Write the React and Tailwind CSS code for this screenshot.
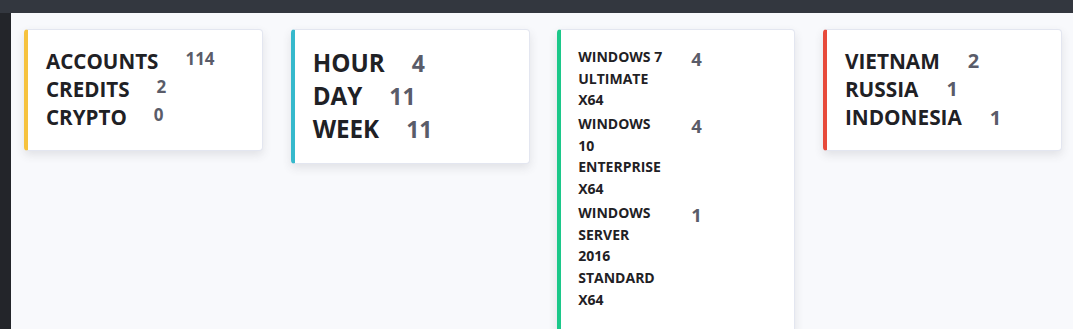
import React from 'react';

const font = { fontFamily: '"Open Sans", "Noto Sans", sans-serif' };

const sources = [
  { label: 'ACCOUNTS', value: 114 },
  { label: 'CREDITS', value: 2 },
  { label: 'CRYPTO', value: 0 },
];

const periods = [
  { label: 'HOUR', value: 4 },
  { label: 'DAY', value: 11 },
  { label: 'WEEK', value: 11 },
];

const systems = [
  { lines: ['WINDOWS 7', 'ULTIMATE', 'X64'], value: 4 },
  { lines: ['WINDOWS', '10', 'ENTERPRISE', 'X64'], value: 4 },
  { lines: ['WINDOWS', 'SERVER', '2016', 'STANDARD', 'X64'], value: 1 },
];

const countries = [
  { label: 'VIETNAM', value: 2 },
  { label: 'RUSSIA', value: 1 },
  { label: 'INDONESIA', value: 1 },
];

const Card = ({ color, className = '', children }) => (
  <div
    className={`flex-1 min-w-0 bg-white rounded-[4px] border border-[#e3e6f0] border-l-4 shadow-[0_4px_10px_rgba(58,59,69,0.12)] ${color} ${className}`}
  >
    {children}
  </div>
);

export default function App() {
  return (
    <div className="w-[1073px] h-[329px] overflow-hidden flex flex-col bg-[#f8f9fc]" style={font}>
      <div className="h-[13px] shrink-0 bg-[#33373f]" />
      <div className="flex flex-1 min-h-0">
        <div className="w-[11px] shrink-0 bg-[#23252a]" />
        <div className="flex-1 flex items-start gap-[27.5px] pl-[13px] pr-[11px] pt-[16px]">
          <Card color="border-l-[#f6c23e]" className="pl-[18px] pt-[17px] pb-[19px]">
            {sources.map((r) => (
              <div key={r.label} className="flex items-center h-[28px]">
                <span className="text-[20.6px] font-bold text-[#1f2125]">{r.label}</span>
                <span className="ml-[27px] -mt-[4px] text-[17px] font-bold text-[#5a5c69]">{r.value}</span>
              </div>
            ))}
          </Card>

          <Card color="border-l-[#36b9cc]" className="pl-[18px] pt-[17px] pb-[17px]">
            {periods.map((r) => (
              <div key={r.label} className="flex items-center h-[33px]">
                <span className="text-[24.2px] font-bold text-[#1f2125]">{r.label}</span>
                <span className="ml-[27px] text-[23px] font-bold text-[#5a5c69]">{r.value}</span>
              </div>
            ))}
          </Card>

          <Card color="border-l-[#1cc88a]" className="pl-[17px] pt-[16px] pb-[20px]">
            {systems.map((r) => (
              <div key={r.value + r.lines[1]} className="flex items-start mb-[2.5px]">
                <div className="w-[92px] text-[14px] leading-[21.6px] font-bold text-[#1f2125]">
                  {r.lines.map((l) => (
                    <div key={l}>{l}</div>
                  ))}
                </div>
                <span className="ml-[21px] text-[18.5px] leading-[26px] font-bold text-[#5a5c69]">{r.value}</span>
              </div>
            ))}
          </Card>

          <Card color="border-l-[#e74a3b]" className="pl-[18px] pt-[17px] pb-[18px]">
            {countries.map((r) => (
              <div key={r.label} className="flex items-center h-[28.3px]">
                <span className="text-[20.8px] font-bold text-[#1f2125]">{r.label}</span>
                <span className="ml-[28px] text-[20px] font-bold text-[#5a5c69]">{r.value}</span>
              </div>
            ))}
          </Card>
        </div>
      </div>
    </div>
  );
}
